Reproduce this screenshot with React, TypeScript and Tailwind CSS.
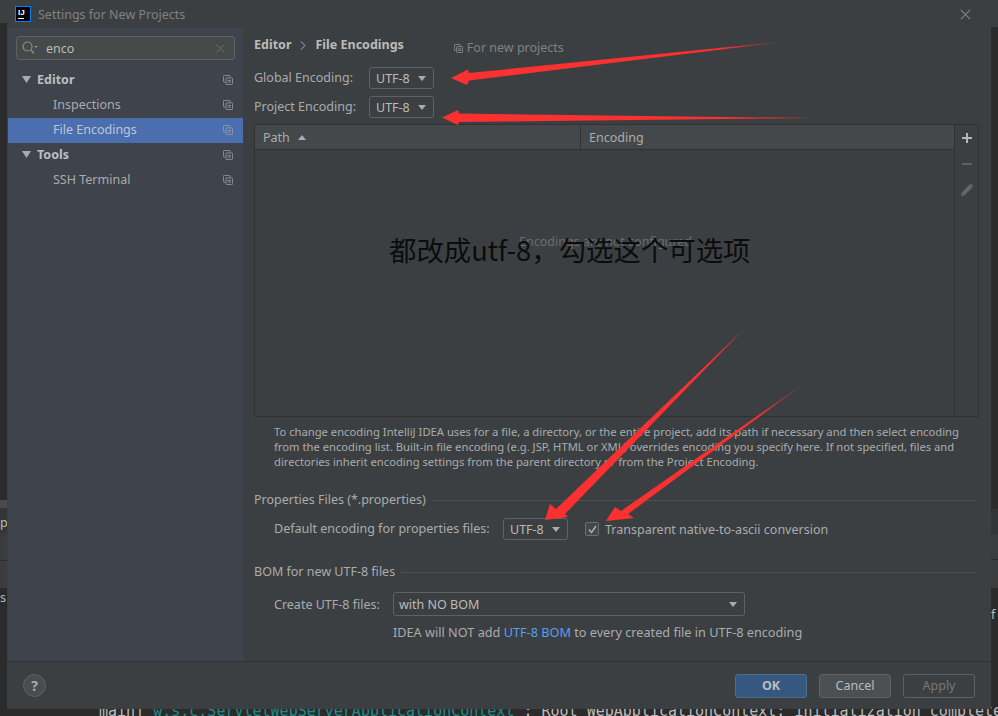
import React from "react";

const Copy = ({ dim, size = 10 }: { dim?: boolean; size?: number }) => (
  <svg width={size} height={size} viewBox="0 0 12 12" fill="none" stroke={dim ? "#8b98a8" : "#8c8f91"} strokeWidth="1.2" className="shrink-0">
    <path d="M8.500 2.500V1.500a1 1 0 0 0-1-1h-6a1 1 0 0 0-1 1v6a1 1 0 0 0 1 1h1" />
    <rect x="3.500" y="3.500" width="8" height="8" rx="1" />
    <path d="M5.500 6.500h4M5.500 8.500h4" />
  </svg>
);

const Tri = ({ up, w = 8, h = 5 }: { up?: boolean; w?: number; h?: number }) => (
  <svg width={w} height={h} viewBox="0 0 10 6" preserveAspectRatio="none" fill="#a9acae" className="shrink-0">
    {up ? <path d="M0 6L5 0l5 6z" /> : <path d="M0 0h10L5 6z" />}
  </svg>
);

const Combo = ({ label }: { label: string }) => (
  <div className="flex items-center justify-between w-[65px] h-[22px] rounded-[3px] border border-[#5f6264] pl-[6px] pr-[7px] pt-px text-[#bbbbbb]">
    <span>{label}</span>
    <Tri />
  </div>
);

const Row = ({ label, indent, bold, active, tri }: { label: string; indent?: boolean; bold?: boolean; active?: boolean; tri?: boolean }) => (
  <div className={`flex items-center h-[25px] pr-[10px] pb-[2px] ${active ? "bg-[#4b6eaf]" : ""}`}>
    {tri && (
      <span className="ml-[14px] w-[15px]">
        <Tri w={9} h={7} />
      </span>
    )}
    <span className={`flex-1 ${indent ? "pl-[45px]" : ""} ${bold ? "font-bold text-[#bcbfc1]" : active ? "text-[#bbc6d8]" : "text-[#a9acae]"}`}>{label}</span>
    <Copy dim={active} />
  </div>
);

const Section = ({ title }: { title: string }) => (
  <div className="flex items-center gap-[6px] h-[18px] mr-[3px] text-[#a9acae]">
    <span>{title}</span>
    <div className="flex-1 h-px bg-[#4e5153]" />
  </div>
);

const Arrows = () => (
  <svg className="absolute left-0 top-0 pointer-events-none" width="998" height="716" viewBox="0 0 998 716">
    <defs>
      <linearGradient id="a1" gradientUnits="userSpaceOnUse" x1="720" y1="48" x2="790" y2="41">
        <stop offset="0" stopColor="#fb3030" />
        <stop offset="1" stopColor="#fb3030" stopOpacity="0.15" />
      </linearGradient>
      <linearGradient id="a3" gradientUnits="userSpaceOnUse" x1="760" y1="413" x2="806" y2="382">
        <stop offset="0" stopColor="#fb3030" />
        <stop offset="1" stopColor="#fb3030" stopOpacity="0.2" />
      </linearGradient>
    </defs>
    <path fill="url(#a1)" d="M451 78L468 69.500L469 73L790 41L469 80.500L467 85Z" />
    <path fill="#fb3030" d="M442 117.500L458 110L459 113.500L811 118L459 122L458 125Z" />
    <path fill="#fb3030" d="M545 520L550 504L556 509L743 330L565 514L568 517Z" />
    <path fill="url(#a3)" d="M606 521L615 507L621 511L806 382L628 514L634 518Z" />
  </svg>
);

function Footer() {
  return (
    <div className="shrink-0 h-[48px] border-t border-[#323232] flex items-center pl-[16px] pr-[16px]">
      <div className="w-[23px] h-[23px] rounded-full border border-[#5f6264] bg-[#4a4d4f] flex items-center justify-center font-bold text-[14px] text-[#a9acae]">?</div>
      <div className="ml-auto flex gap-[12px]">
        <div className="w-[72px] h-[24px] rounded-[3px] border border-[#4c708c] bg-[#365880] flex items-center justify-center font-bold text-[#bbbbbb]">OK</div>
        <div className="w-[72px] h-[24px] rounded-[3px] border border-[#5f6264] bg-[#4c5052] pt-px flex items-center justify-center text-[#bbbbbb]">Cancel</div>
        <div className="w-[72px] h-[24px] rounded-[3px] border border-[#5e6060] pt-px flex items-center justify-center text-[#777777]">Apply</div>
      </div>
    </div>
  );
}

export default function App() {
  return (
    <div className="relative w-[998px] h-[716px] overflow-hidden bg-[#2b2b2b] text-[12.5px] leading-[18px] text-[#a9acae]" style={{ fontFamily: '"Noto Sans", "Open Sans", "Noto Sans CJK SC", sans-serif' }}>
      {/* editor and tool windows behind the dialog */}
      <div className="absolute left-[99px] top-[702px] whitespace-pre text-[15px] leading-[18px] text-[#bbbbbb]" style={{ fontFamily: '"DejaVu Sans Mono", monospace' }}>
        main] <span className="text-[#1f8a8a]">w.s.c.ServletWebServerApplicationContext</span> : Root WebApplicationContext: initialization completed
      </div>
      <div className="absolute left-0 top-0 w-[7px] h-[23px] bg-[#3c3f41]" />
      <div className="absolute left-0 top-[500px] w-[7px] h-[8px] bg-[#4a4a4a]" />
      <div className="absolute left-0 top-[508px] w-[7px] h-[25px] bg-[#333537] overflow-hidden text-[#bbbbbb]">
        <span className="absolute left-0 top-[6px]">p</span>
      </div>
      <div className="absolute left-0 top-[533px] w-[7px] h-[27px] bg-[#3a3c3e]" />
      <div className="absolute left-0 top-[561px] w-[7px] h-[27px] bg-[#3a3c3e]" />
      <div className="absolute left-0 top-[589px] overflow-hidden w-[7px] h-[20px] text-[#bbbbbb]">s</div>
      <div className="absolute right-0 top-0 w-[7px] h-[27px] bg-[#3c3f41]" />
      <div className="absolute right-0 top-[509px] w-[7px] h-[25px] bg-[#333537]" />
      <div className="absolute right-0 top-[534px] w-[7px] h-[25px] bg-[#3a3c3e]" />
      <div className="absolute right-0 top-[560px] w-[7px] h-[28px] bg-[#3a3c3e]" />
      <div className="absolute right-0 top-[606px] w-[7px] h-[18px] overflow-hidden text-[#bbbbbb]">f</div>

      {/* dialog */}
      <div className="absolute left-[7px] top-0 w-[984px] h-[709px] flex flex-col bg-[#3c3f41]">
        <div className="flex items-center h-[28px] shrink-0 pl-[8px] pr-[20px]">
          <div className="w-[16px] h-[16px] bg-[#087cfa] p-px">
            <div className="w-full h-full bg-black flex flex-col text-white text-[8px] leading-[8px] font-bold pl-[2px] pt-[2px]" style={{ fontFamily: '"Liberation Sans", sans-serif' }}>
              <span>IJ</span>
              <div className="w-[6px] h-px bg-white mt-px" />
            </div>
          </div>
          <span className="ml-[7px] mt-[2px] text-[#7f8284]">Settings for New Projects</span>
          <svg width="11" height="11" viewBox="0 0 12 12" className="ml-auto" stroke="#85888a" strokeWidth="1.1" fill="none">
            <path d="M1 1l10 10M11 1L1 11" />
          </svg>
        </div>

        <div className="flex flex-1 min-h-0">
          {/* sidebar */}
          <div className="w-[236px] shrink-0 pt-[8px] bg-[#3e434c] border-l border-[#3c3f41]">
            <div className="mx-[8px] h-[24px] flex items-center rounded-[3px] border border-[#5f6264] bg-[#45494a] px-[5px] text-[#bbbbbb]">
              <svg width="16" height="14" viewBox="0 0 16 14" fill="none" stroke="#8c8f91" strokeWidth="1.2">
                <circle cx="5.500" cy="5.500" r="4.500" />
                <path d="M9 9l3 3.500" />
                <path d="M12 5h4l-2 2z" fill="#8c8f91" stroke="none" />
              </svg>
              <span className="ml-[8px] mt-[2px]">enco</span>
              <svg width="9" height="9" viewBox="0 0 9 9" className="ml-auto mr-[4px]" stroke="#6e7173" strokeWidth="1" fill="none">
                <path d="M.5.500l8 8M8.500.500l-8 8" />
              </svg>
            </div>
            <div className="mt-[8px]">
              <Row label="Editor" bold tri />
              <Row label="Inspections" indent />
              <Row label="File Encodings" indent active />
              <Row label="Tools" bold tri />
              <Row label="SSH Terminal" indent />
            </div>
          </div>

          {/* content */}
          <div className="flex-1 min-w-0 pl-[11px] pr-[12px] pt-[7px]">
            <div className="flex items-center h-[20px] text-[#bbbbbb] font-bold">
              <span>Editor</span>
              <svg width="6" height="9" viewBox="0 0 6 9" className="mx-[9px]" stroke="#a9acae" fill="none">
                <path d="M1 .500l4 4-4 4" />
              </svg>
              <span>File Encodings</span>
              <span className="ml-[50px] mt-[6px] flex items-center gap-[4px] font-normal text-[#7f8284]">
                <Copy size={9} />
                For new projects
              </span>
            </div>
            <div className="mt-[12px] flex items-center h-[22px]">
              <span className="w-[115px]">Global Encoding:</span>
              <Combo label="UTF-8" />
            </div>
            <div className="mt-[7px] flex items-center h-[22px]">
              <span className="w-[115px]">Project Encoding:</span>
              <Combo label="UTF-8" />
            </div>

            <div className="mt-[6px] h-[293px] flex border border-[#323232]">
              <div className="flex-1 min-w-0 flex flex-col">
                <div className="h-[25px] shrink-0 flex bg-[#45484a] border-b border-[#323232] pt-px text-[#a9acae]">
                  <div className="w-[326px] border-r border-[#323232] pl-[8px] flex items-center gap-[8px]">
                    <span>Path</span>
                    <Tri up />
                  </div>
                  <div className="pl-[8px] flex items-center">Encoding</div>
                </div>
                <div className="relative flex-1">
                  <span className="absolute left-[264px] top-[83px] text-[#6a6d6f]">Encodings are not configured</span>
                  <span className="absolute left-[134px] top-[81px] text-[27.4px] leading-[36px] whitespace-nowrap text-[#0c0c0c]" style={{ fontFamily: '"Noto Sans CJK SC", sans-serif' }}>都改成utf-8，勾选这个可选项</span>
                </div>
              </div>
              <div className="w-[24px] shrink-0 border-l border-[#323232] flex flex-col items-center pt-[6px] gap-[12px]">
                <svg width="14" height="14" viewBox="0 0 14 14" fill="#b4b7b9"><path d="M6 2h2v4h4v2H8v4H6V8H2V6h4z" /></svg>
                <svg width="14" height="14" viewBox="0 0 14 14" fill="#5f6264"><path d="M2 6h10v2H2z" /></svg>
                <svg width="14" height="14" viewBox="0 0 14 14" fill="#65686a"><path d="M1 13l.8-3.600L9.600 1.600l2.800 2.800-7.800 7.800zM10.400.8l.7-.3 2.400 2.400-.3.700-.4.400-2.800-2.800z" /></svg>
              </div>
            </div>

            <div className="mt-[7px] pl-[20px] text-[11.22px] leading-[15px] text-[#a9acae] whitespace-nowrap">
              <div>To change encoding IntelliJ IDEA uses for a file, a directory, or the entire project, add its path if necessary and then select encoding</div>
              <div>from the encoding list. Built-in file encoding (e.g. JSP, HTML or XML) overrides encoding you specify here. If not specified, files and</div>
              <div>directories inherit encoding settings from the parent directory or from the Project Encoding.</div>
            </div>

            <div className="mt-[22px]">
              <Section title="Properties Files (*.properties)" />
            </div>
            <div className="mt-[9px] pl-[20px] flex items-center h-[22px]">
              <span className="w-[229px]">Default encoding for properties files:</span>
              <Combo label="UTF-8" />
              <div className="ml-[17px] w-[14px] h-[14px] rounded-[2px] border border-[#6b6e70] bg-[#43494a] flex items-center justify-center">
                <svg width="9" height="9" viewBox="0 0 9 9" fill="none" stroke="#a9acae" strokeWidth="1.6">
                  <path d="M1 4.500l2.500 3L8 1" />
                </svg>
              </div>
              <span className="ml-[6px] pt-px">Transparent native-to-ascii conversion</span>
            </div>

            <div className="mt-[23px]">
              <Section title="BOM for new UTF-8 files" />
            </div>
            <div className="mt-[11px] pl-[20px] flex items-center h-[24px]">
              <span className="w-[119px] pt-px">Create UTF-8 files:</span>
              <div className="w-[352px] h-[24px] flex items-center justify-between rounded-[3px] border border-[#5f6264] pl-[5px] pr-[7px] pt-px text-[#bbbbbb]">
                <span>with NO BOM</span>
                <Tri />
              </div>
            </div>
            <div className="mt-[7px] pl-[139px] text-[12.7px] text-[#a9acae]">
              IDEA will NOT add <span className="text-[#589df6]">UTF-8 BOM</span> to every created file in UTF-8 encoding
            </div>
          </div>
        </div>

        <Footer />
      </div>
      <Arrows />
    </div>
  );
}
